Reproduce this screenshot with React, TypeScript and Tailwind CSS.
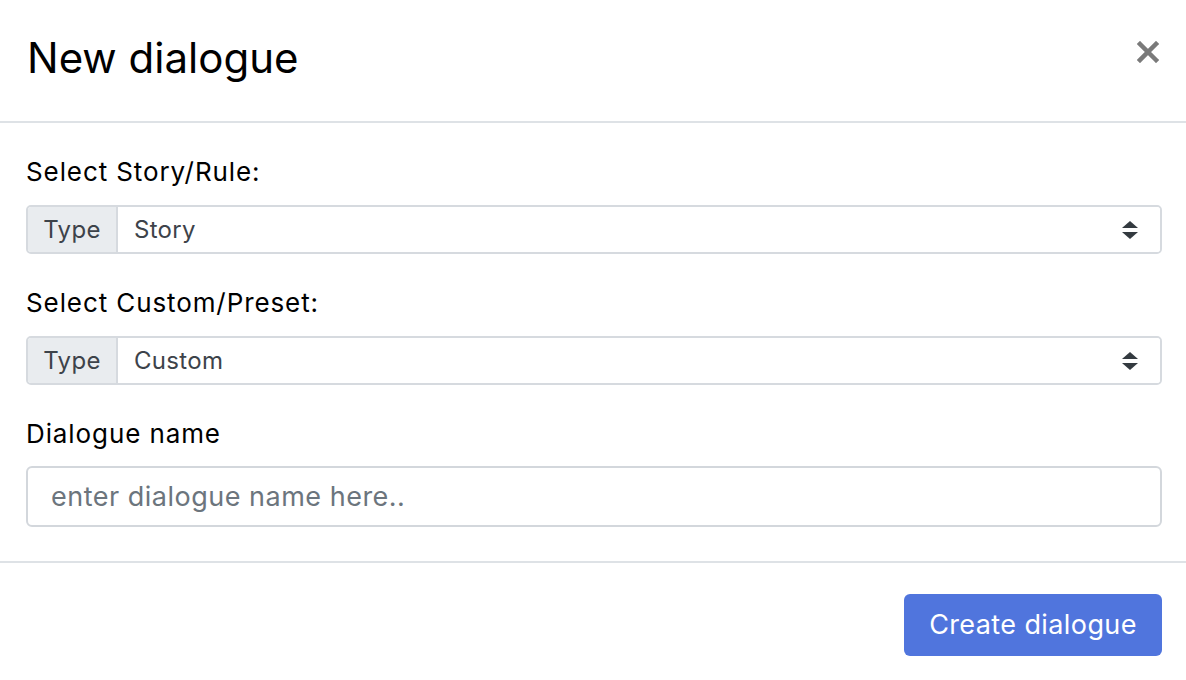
import { useState } from "react";

const FONT = { fontFamily: "Inter, 'Noto Sans', sans-serif" };

function SortArrows() {
  return (
    <svg width="16" height="18" viewBox="0 0 16 18" className="shrink-0">
      <path d="M8 0 L16 7 L0 7 Z" fill="#343a40" />
      <path d="M0 11 L16 11 L8 18 Z" fill="#343a40" />
    </svg>
  );
}

function SelectGroup({ value }: { value: string }) {
  return (
    <div className="flex h-[49px] w-full rounded-[5px] border-2 border-[#d6dadf] overflow-hidden">
      <div className="flex w-[90px] items-center justify-center border-r-2 border-[#d6dadf] bg-[#e9ecef] text-[24px] tracking-[0.3px] text-[#3d434a]">
        Type
      </div>
      <div className="flex flex-1 items-center justify-between bg-white pl-[16px] pr-[22px] text-[24px] tracking-[0.3px] text-[#3d434a]">
        <span>{value}</span>
        <SortArrows />
      </div>
    </div>
  );
}

export default function App() {
  const [name, setName] = useState("");

  return (
    <div className="h-[680px] w-[1186px] bg-white text-[#111]" style={FONT}>
      {/* Header */}
      <div className="flex h-[123px] items-center justify-between border-b-2 border-[#dee2e6] pl-[27px] pr-[27px] pb-[6px]">
        <h2 className="text-[42px] font-normal leading-none text-black">New dialogue</h2>
        <button className="mb-[12px]">
          <svg width="22" height="22" viewBox="0 0 22 22">
            <path d="M3 3 L19 19 M19 3 L3 19" stroke="#7a7a7a" strokeWidth="4.5" strokeLinecap="square" />
          </svg>
        </button>
      </div>

      {/* Body */}
      <div className="border-b-2 border-[#dee2e6] pl-[26px] pr-[24px] pt-[31px] pb-[34px]">
        <label className="block h-[36px] text-[26px] leading-[36px] tracking-[0.9px] text-black">Select Story/Rule:</label>
        <div className="mt-[15px]">
          <SelectGroup value="Story" />
        </div>

        <label className="mt-[31px] block h-[36px] text-[26px] leading-[36px] tracking-[0.9px] text-black">Select Custom/Preset:</label>
        <div className="mt-[15px]">
          <SelectGroup value="Custom" />
        </div>

        <label className="mt-[31px] block h-[36px] text-[26px] leading-[36px] tracking-[0.9px] text-black">Dialogue name</label>
        <input
          value={name}
          onChange={(e) => setName(e.target.value)}
          placeholder="enter dialogue name here.."
          className="mt-[14px] block h-[61px] w-full rounded-[6px] border-2 border-[#d3d7dc] px-[23px] text-[27px] tracking-[0.5px] text-[#212529] outline-none placeholder:text-[#6c757d]"
        />
      </div>

      {/* Footer */}
      <div className="flex justify-end pr-[24px] pt-[31px]">
        <button className="h-[62px] w-[258px] rounded-[6px] bg-[#5075dd] text-[27px] tracking-[0.4px] text-white">
          Create dialogue
        </button>
      </div>
    </div>
  );
}
